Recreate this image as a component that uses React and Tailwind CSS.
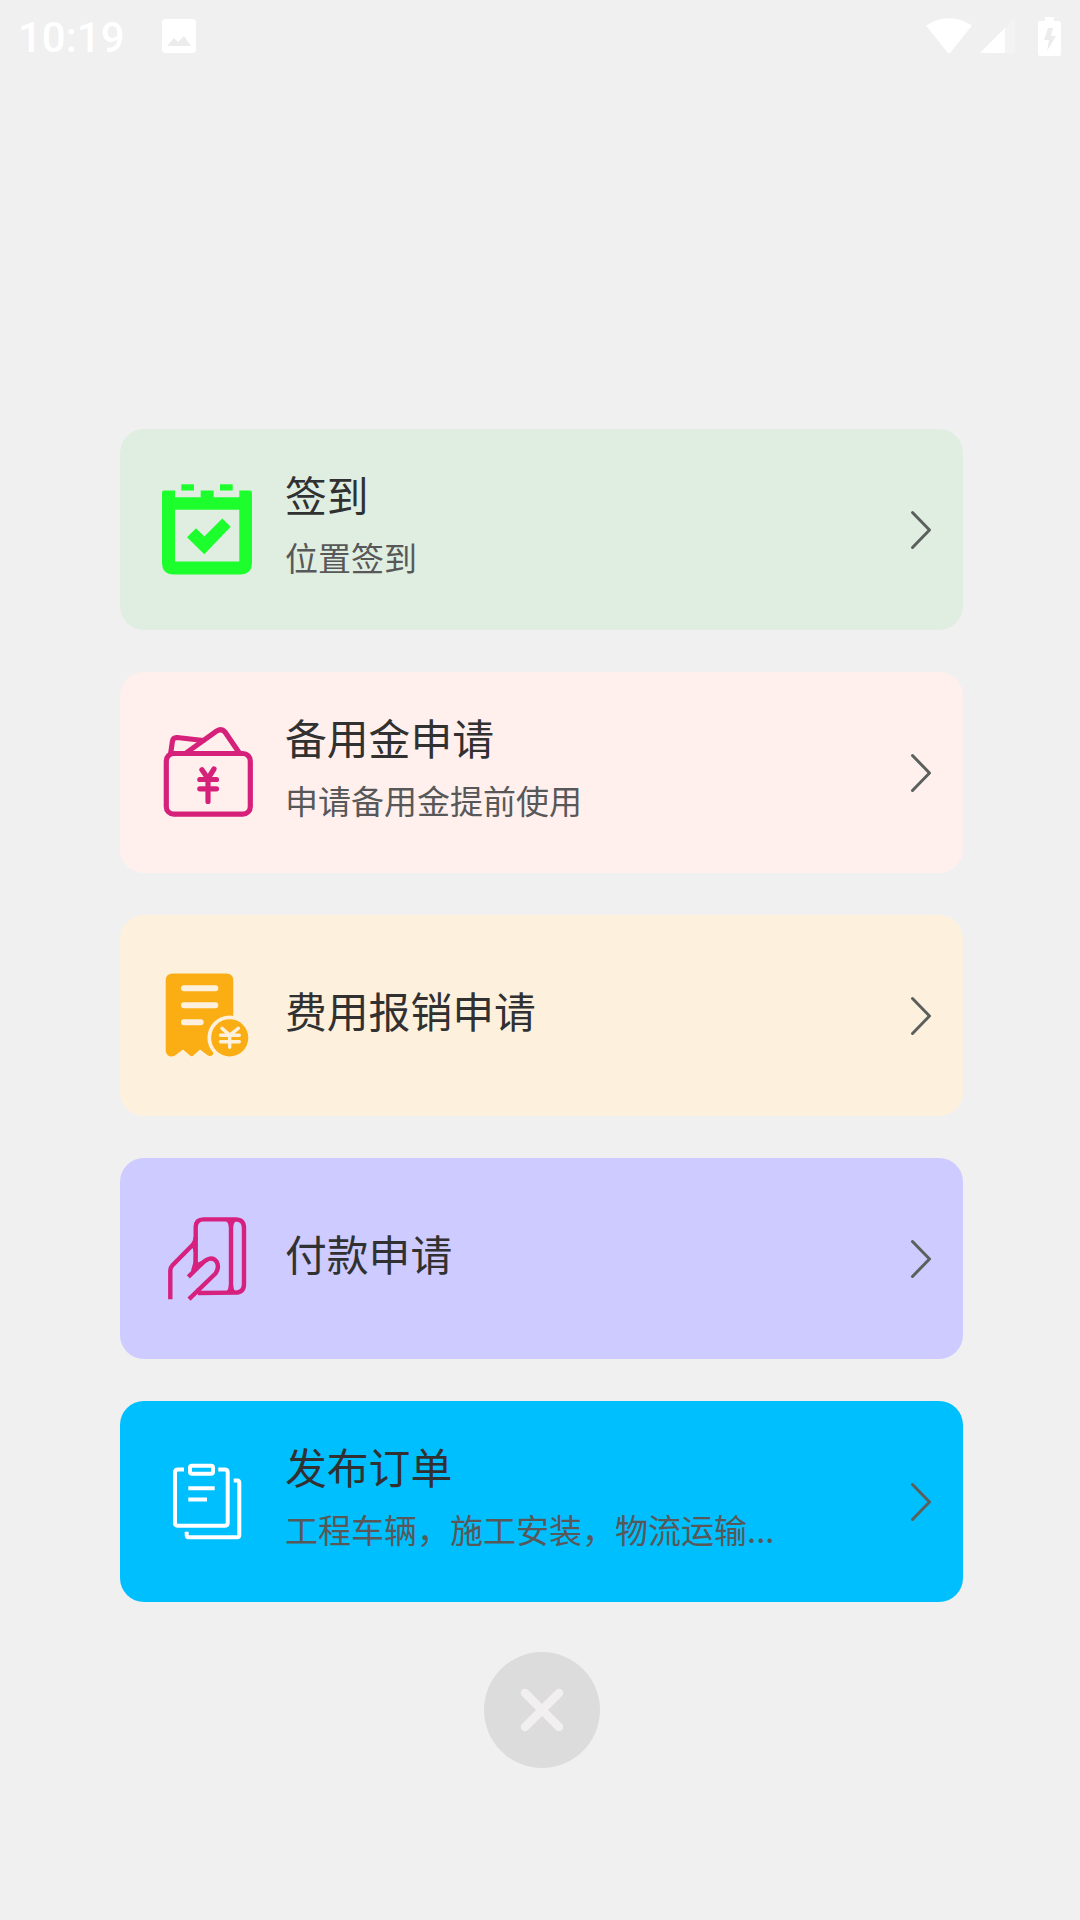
import React from "react";

const CheckInIcon = () => (
  <svg viewBox="0 0 90 90" className="w-[90px] h-[90px] mb-px shrink-0 overflow-visible" fill="#1cff2c">
    <path
      fillRule="evenodd"
      d="M2 6.5H13V13.2H38.7V6.5H51.7V13.2H77.3V6.5H88Q90 6.5 90 8.5V78.5Q90 90.5 78 90.5H12Q0 90.5 0 78.5V8.5Q0 6.5 2 6.5ZM13 25.8V77.5H77.3V25.8Z"
    />
    <rect x="19.3" y="0.3" width="12.7" height="6.2" />
    <rect x="58" y="0.3" width="12.7" height="6.2" />
    <path d="M25 53.2L34 44.2L42.3 52.5L60.3 34.5L68.7 42.8L42.3 70.2Z" />
  </svg>
);

const WalletIcon = () => (
  <svg
    viewBox="0 0 90 90"
    className="w-[90px] h-[90px] mb-px shrink-0 overflow-visible"
    fill="none"
    stroke="#d6217a"
    strokeWidth="5.2"
    strokeLinecap="round"
    strokeLinejoin="round"
  >
    <rect x="4.3" y="26.5" width="84" height="60.7" rx="7.5" />
    <path d="M8.6 27L10.4 14.5Q11 10.3 15 10.5L41.3 13.5" />
    <path d="M24.7 25.5L54.5 4.2Q59.5 0.8 63 5L77 25.5" />
    <path d="M39.9 42.8L46 51.5L52 42M46 51.5V74.5M37.8 52.5H54.5M37.8 61.8H54.5" />
  </svg>
);

const ReceiptIcon = () => (
  <svg viewBox="0 0 90 90" className="w-[90px] h-[90px] mb-px shrink-0 overflow-visible" fill="none">
    <path
      d="M11 3.5H64Q71.3 3.5 71.3 10.8V70H56L50.7 85Q48.5 87 46 85.4L38 79.5L31.3 85.5Q29.7 87 28 85.5L21 79.5L13 85.5Q9 87.5 6 85.4Q3.7 83.5 3.7 81V10.8Q3.7 3.5 11 3.5Z"
      fill="#fbad14"
    />
    <path
      d="M22 18.2H53.3M22 35.2H53.3M22 52.2H38.7"
      stroke="#fdf1de"
      strokeWidth="6"
      strokeLinecap="round"
    />
    <circle cx="67.7" cy="67.8" r="22.3" fill="#fdf1de" />
    <circle cx="67.7" cy="67.8" r="18.6" fill="#fbad14" />
    <path
      d="M60 58.4L67.7 65L76.3 58.4M67.7 65V77.3M58.5 65.2H77.3M58.5 71.8H77.3"
      stroke="#fdf1de"
      strokeWidth="3.4"
      strokeLinecap="round"
    />
  </svg>
);

const PaymentIcon = () => (
  <svg
    viewBox="0 0 90 90"
    className="w-[90px] h-[90px] mb-px shrink-0 overflow-visible"
    fill="none"
    stroke="#d6217f"
    strokeWidth="4.4"
    strokeLinejoin="round"
  >
    <path d="M33.7 52V14.2Q33.7 6.4 41.5 6.4H73.5Q82 6.4 82 15V71Q82 79.6 73.5 79.6L36 80" />
    <path d="M69 6.4V79.6" />
    <path d="M8.3 86.2V57.5Q8.3 54.5 10.5 52.2L31 31.5Q33.7 28.5 33.7 24" />
    <path d="M26.3 63.8L38 52.5Q42.5 47.5 46.5 46Q51.5 44.5 54.5 48.5Q57.8 54 53.5 60.5L27 86.2" />
    <g fill="#d6217f" stroke="none">
      <path d="M62 7L76 7Q71.2 9 71.2 14L66.8 14Q66.8 9 62 7Z" />
      <path d="M62 79.5L76 79.5Q71.2 78 71.2 72L66.8 72Q66.8 78 62 79.5Z" />
      <path d="M29 33L34.5 26L34.5 50L42 47L33 59L29 57.5L31.5 49L31.8 40Q31.8 36 29 33Z" />
      <path d="M34 76Q37.5 74 38.5 75.5Q37.5 78.5 41 78.5L34 81Z" />
    </g>
  </svg>
);

const OrderIcon = () => (
  <svg
    viewBox="0 0 90 90"
    className="w-[90px] h-[90px] mb-px shrink-0 overflow-visible"
    fill="none"
    stroke="#fff"
    strokeWidth="4"
    strokeLinejoin="round"
  >
    <path d="M22 13.5H16Q13 13.5 13 16.5V66.8Q13 69.8 16 69.8H62.7Q65.7 69.8 65.7 66.8V16.5Q65.7 13.5 62.7 13.5H56.3" />
    <rect x="28" y="9.8" width="23" height="8" rx="2" />
    <path d="M26.3 32.2H52.7M26.3 43.5H45" />
    <path d="M71.7 24.5H75.3Q77.3 24.5 77.3 27V78.7Q77.3 81.2 75 81.2H27Q24.7 81.2 24.7 79V75.8" />
  </svg>
);

const StatusBar = () => (
  <header className="w-full h-[72px] pl-[18px] pr-[19px] flex items-center justify-between text-white">
    <div className="flex items-center gap-[38px]">
      <p className="w-[106px] pt-[3px] text-[42px] leading-none font-medium font-[Roboto,sans-serif]">
        10:19
      </p>
      <svg viewBox="0 0 34 34" className="w-[34px] h-[34px]">
        <rect width="34" height="34" rx="4" fill="#fff" />
        <path d="M5 27L12 19L16 23L22 17L29 27Z" fill="#ececec" />
      </svg>
    </div>
    <div className="flex items-center">
      <svg viewBox="0 0 46 36" className="w-[46px] h-9 mr-[8px]">
        <path d="M0 7.5Q23 -7 46 7.5L24.5 34.5Q23 36 21.5 34.5Z" fill="#fff" />
      </svg>
      <svg viewBox="0 0 36 36" className="w-9 h-9 mr-[22px]">
        <path d="M0 35L35 0V35Z" fill="#f3f3f3" />
        <path d="M0 35L25 10V35Z" fill="#fff" />
      </svg>
      <svg viewBox="0 0 23 39" className="w-[23px] h-[39px]">
        <path
          d="M7 0H16V4H21Q23 4 23 6V37Q23 39 21 39H2Q0 39 0 37V6Q0 4 2 4H7Z"
          fill="#fff"
        />
        <path d="M10 11H15L13 19H18L9 34L11 23H6Z" fill="#ececec" />
      </svg>
    </div>
  </header>
);

const menus = [
  { title: "签到", desc: "位置签到", icon: CheckInIcon, bg: "bg-[#e0eee2]" },
  { title: "备用金申请", desc: "申请备用金提前使用", icon: WalletIcon, bg: "bg-[#fff0ee]" },
  { title: "费用报销申请", icon: ReceiptIcon, bg: "bg-[#fdf1de]" },
  { title: "付款申请", icon: PaymentIcon, bg: "bg-[#cdcbff]" },
  {
    title: "发布订单",
    desc: "工程车辆，施工安装，物流运输...",
    icon: OrderIcon,
    bg: "bg-[#00bfff]",
  },
];

const MenuCard = ({ title, desc, icon: Icon, bg }) => (
  <button
    type="button"
    className={`w-full h-[201px] pl-[42px] pr-[31px] rounded-[24px] flex items-center text-left cursor-pointer ${bg}`}
  >
    <Icon />
    <div className="flex-1 ml-[33px] pb-[11px]">
      <p className="text-[41.8px] leading-[62px] text-[#313131]">{title}</p>
      {desc && <p className="mt-[3px] text-[33px] leading-[58px] text-[#585858]">{desc}</p>}
    </div>
    <svg
      viewBox="0 0 22 40"
      className="w-[22px] h-10 shrink-0"
      fill="none"
      stroke="#5c605d"
      strokeWidth="3"
      strokeLinecap="round"
      strokeLinejoin="round"
    >
      <path d="M2.5 2.5L19.5 20L2.5 37.5" />
    </svg>
  </button>
);

const App = () => {
  return (
    <div className="w-[1080px] h-[1920px] overflow-hidden bg-[#f0f0f0] flex flex-col items-center font-['Noto_Sans_CJK_SC',sans-serif]">
      <StatusBar />

      {/* actions */}
      <main className="w-[843px] mt-[357px] ml-[3px] flex flex-col gap-[42px]">
        {menus.map((menu) => (
          <MenuCard key={menu.title} {...menu} />
        ))}
      </main>

      {/* close */}
      <button
        type="button"
        aria-label="关闭"
        className="w-[116px] h-[116px] mt-[50px] ml-[3px] rounded-full bg-[#dddcdd] flex items-center justify-center cursor-pointer"
      >
        <svg
          viewBox="0 0 44 44"
          className="w-11 h-11"
          stroke="#f1eff0"
          strokeWidth="8.5"
          strokeLinecap="round"
        >
          <path d="M5 5L39 39M39 5L5 39" />
        </svg>
      </button>
    </div>
  );
};

export default App;
